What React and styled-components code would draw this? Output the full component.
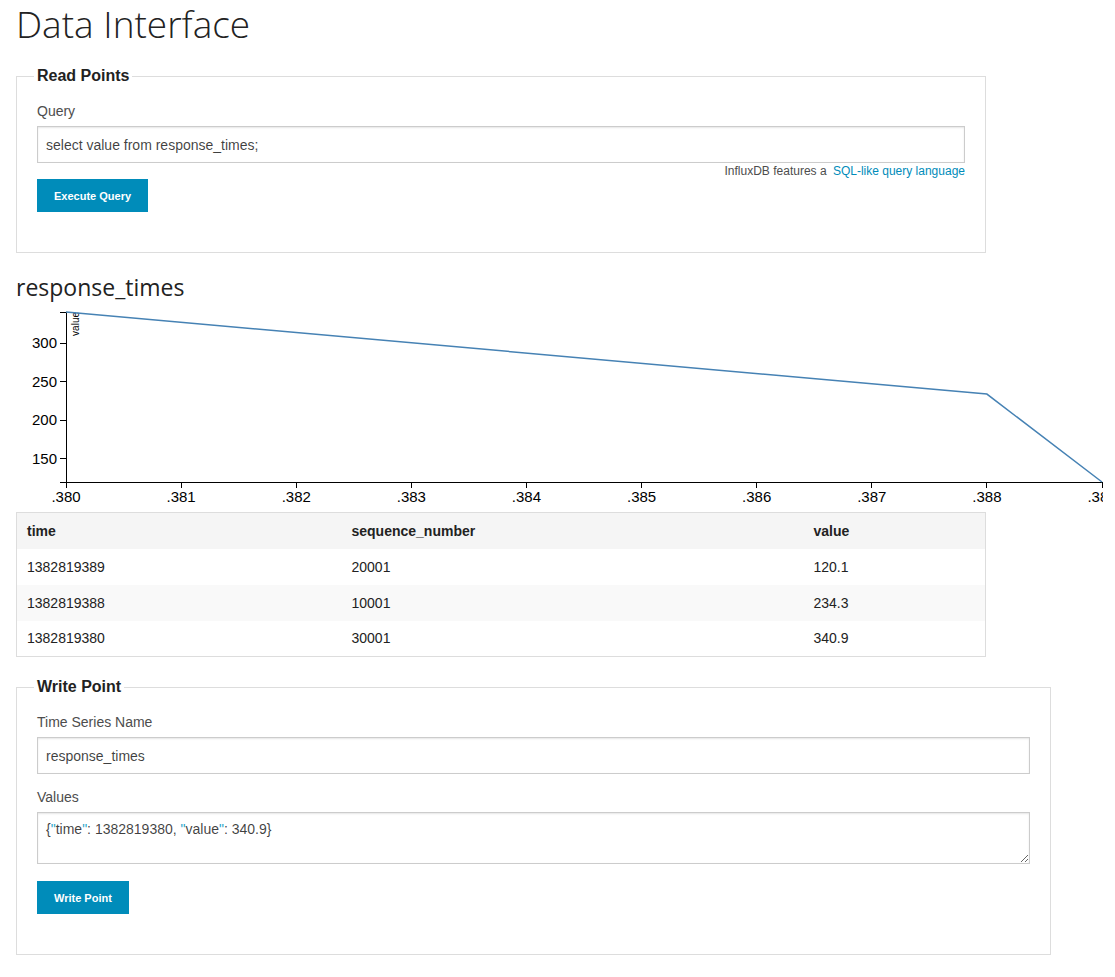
import React from 'react';
import styled, { createGlobalStyle } from 'styled-components';

const GlobalStyle = createGlobalStyle`
  body {
    margin: 0;
    background: #fff;
    font-family: "Liberation Sans", Arial, sans-serif;
    color: #222;
  }
`;

const rows = [
  { time: 1382819389, seq: 20001, value: 120.1 },
  { time: 1382819388, seq: 10001, value: 234.3 },
  { time: 1382819380, seq: 30001, value: 340.9 },
];

// chart geometry
const PLOT_W = 1036;
const PLOT_H = 170;
const LEFT = 50;
const TOP = 11;
const yMin = 120.1;
const yMax = 340.9;
const xScale = (t) => ((t - 380) / 9) * PLOT_W;
const yScale = (v) => PLOT_H - ((v - yMin) / (yMax - yMin)) * PLOT_H;

const Chart = () => {
  const pts = [...rows]
    .sort((a, b) => a.time - b.time)
    .map((r) => `${xScale(r.time % 1000)},${yScale(r.value)}`)
    .join(' L');
  const xTicks = [380, 381, 382, 383, 384, 385, 386, 387, 388, 389];
  const yTicks = [150, 200, 250, 300];

  return (
    <ChartSvg width={LEFT + PLOT_W + 1} height={211}>
      <g transform={`translate(${LEFT},${TOP})`}>
        <g className="axis" transform={`translate(0,${PLOT_H})`}>
          {xTicks.map((t) => (
            <g key={t} className="tick" transform={`translate(${xScale(t)},0)`}>
              <line y2="6" />
              <text y="9" dy=".71em" textAnchor="middle">.{t}</text>
            </g>
          ))}
          <path d={`M0,6V0H${PLOT_W}V6`} />
        </g>
        <g className="axis">
          {yTicks.map((v) => (
            <g key={v} className="tick" transform={`translate(0,${yScale(v)})`}>
              <line x2="-6" />
              <text x="-9" dy=".32em" textAnchor="end">{v}</text>
            </g>
          ))}
          <path d={`M-6,0H0V${PLOT_H}H-6`} />
          <AxisLabel transform="rotate(-90)" y="6" dy=".71em" textAnchor="end">
            value
          </AxisLabel>
        </g>
        <path className="line" d={`M${pts}`} />
      </g>
    </ChartSvg>
  );
};

const App = () => (
  <Page>
    <GlobalStyle />
    <Title>Data Interface</Title>

    <Fieldset $width={970}>
      <Legend>Read Points</Legend>
      <Label>Query</Label>
      <Input defaultValue="select value from response_times;" $mb={0} />
      <Help>
        InfluxDB features a <HelpLink href="#">SQL-like query language</HelpLink>
      </Help>
      <Button>Execute Query</Button>
    </Fieldset>

    <SeriesName>response_times</SeriesName>
    <Chart />

    <Table>
      <thead>
        <tr>
          <Th $w={325}>time</Th>
          <Th $w={462}>sequence_number</Th>
          <Th>value</Th>
        </tr>
      </thead>
      <tbody>
        {rows.map((r) => (
          <Tr key={r.time}>
            <Td>{r.time}</Td>
            <Td>{r.seq}</Td>
            <Td>{r.value}</Td>
          </Tr>
        ))}
      </tbody>
    </Table>

    <Fieldset $width={1035}>
      <Legend>Write Point</Legend>
      <Label>Time Series Name</Label>
      <Input defaultValue="response_times" $mb={13} />
      <Label>Values</Label>
      <TextArea>
        {'{'}<Quote>"</Quote>time<Quote>"</Quote>: 1382819380, <Quote>"</Quote>value<Quote>"</Quote>: 340.9{'}'}
      </TextArea>
      <Button>Write Point</Button>
    </Fieldset>
  </Page>
);

const Page = styled.div`
  padding: 2px 0 0 16px;
`;

const Title = styled.h1`
  margin: 0;
  font-family: "Open Sans", sans-serif;
  font-weight: 300;
  font-size: 37px;
  line-height: 44px;
  color: #222;
`;

const Fieldset = styled.fieldset`
  box-sizing: border-box;
  width: ${({ $width }) => $width}px;
  min-width: 0;
  margin: 22px 0 0;
  padding: 17px 20px 40px;
  border: 1px solid #ddd;

  & + & {
    margin-top: 20px;
  }
`;

const Legend = styled.legend`
  margin-left: -3px;
  padding: 0 3px;
  font-size: 16px;
  line-height: 16px;
  font-weight: bold;
  color: #222;
`;

const Label = styled.label`
  display: block;
  margin-bottom: 4px;
  font-size: 14px;
  line-height: 21px;
  color: #4d4d4d;
`;

const Input = styled.input`
  display: block;
  box-sizing: border-box;
  width: 100%;
  height: 37px;
  margin: 0 0 ${({ $mb }) => $mb}px;
  padding: 8px;
  border: 1px solid #ccc;
  box-shadow: inset 0 1px 2px rgba(0, 0, 0, 0.1);
  font-family: "Liberation Sans", Arial, sans-serif;
  font-size: 14px;
  color: rgba(0, 0, 0, 0.75);
  outline: none;
`;

const TextArea = styled.div`
  box-sizing: border-box;
  height: 52px;
  margin-bottom: 17px;
  padding: 8px;
  border: 1px solid #ccc;
  box-shadow: inset 0 1px 2px rgba(0, 0, 0, 0.1);
  font-size: 14px;
  line-height: 16px;
  color: rgba(0, 0, 0, 0.75);
  overflow: auto;
  resize: vertical;
`;

const Quote = styled.span`
  color: #2ba6cb;
`;

const Help = styled.div`
  text-align: right;
  font-size: 12px;
  line-height: 16px;
  color: #4d4d4d;
`;

const HelpLink = styled.a`
  margin-left: 3px;
  color: #008cba;
  text-decoration: none;
`;

const Button = styled.button`
  display: block;
  height: 33px;
  padding: 0 17px;
  border: none;
  background: #008cba;
  color: #fff;
  font-family: "Liberation Sans", Arial, sans-serif;
  font-size: 11px;
  font-weight: bold;
  cursor: pointer;
`;

const SeriesName = styled.h2`
  margin: 21px 0 0;
  font-family: "Open Sans", sans-serif;
  font-weight: 400;
  font-size: 23px;
  line-height: 27px;
  color: #222;
`;

const ChartSvg = styled.svg`
  display: block;
  font-family: "Liberation Sans", Arial, sans-serif;

  .axis path,
  .axis line {
    fill: none;
    stroke: #000;
    shape-rendering: crispEdges;
  }

  .tick text {
    font-size: 15px;
    fill: #000;
  }

  .line {
    fill: none;
    stroke: steelblue;
    stroke-width: 1.5px;
  }
`;

const AxisLabel = styled.text`
  font-size: 10px;
  fill: #000;
`;

const Table = styled.table`
  width: 970px;
  border-collapse: collapse;
  border: 1px solid #ddd;
  font-size: 14px;
  color: #222;
`;

const Th = styled.th`
  width: ${({ $w }) => ($w ? `${$w}px` : 'auto')};
  height: 36px;
  padding: 0 10px;
  box-sizing: border-box;
  background: #f5f5f5;
  text-align: left;
  font-weight: bold;
`;

const Tr = styled.tr`
  background: #fff;

  &:nth-child(even) {
    background: #f9f9f9;
  }
`;

const Td = styled.td`
  height: 36px;
  padding: 0 10px;
  box-sizing: border-box;
`;

export default App;
